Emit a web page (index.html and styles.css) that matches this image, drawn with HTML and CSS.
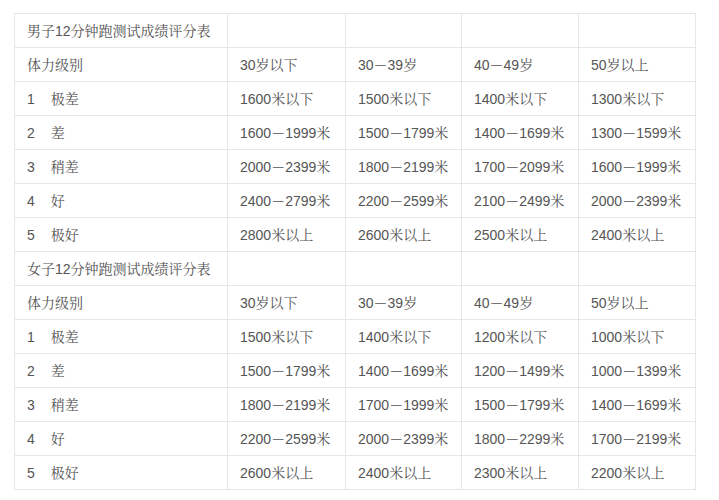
FILE: index.html
```html
<!DOCTYPE html>
<html lang="zh">
<head>
<meta charset="utf-8">
<link rel="stylesheet" href="styles.css">
</head>
<body>
<table class="score">
<colgroup><col class="c1"><col class="c2"><col class="c3"><col class="c4"><col class="c5"></colgroup>
<tbody>
<tr><td>男子12分钟跑测试成绩评分表</td><td></td><td></td><td></td><td></td></tr>
<tr><td>体力级别</td><td>30岁以下</td><td>30－39岁</td><td>40－49岁</td><td>50岁以上</td></tr>
<tr><td>1<span class="gap"></span>极差</td><td>1600米以下</td><td>1500米以下</td><td>1400米以下</td><td>1300米以下</td></tr>
<tr><td>2<span class="gap"></span>差</td><td>1600－1999米</td><td>1500－1799米</td><td>1400－1699米</td><td>1300－1599米</td></tr>
<tr><td>3<span class="gap"></span>稍差</td><td>2000－2399米</td><td>1800－2199米</td><td>1700－2099米</td><td>1600－1999米</td></tr>
<tr><td>4<span class="gap"></span>好</td><td>2400－2799米</td><td>2200－2599米</td><td>2100－2499米</td><td>2000－2399米</td></tr>
<tr><td>5<span class="gap"></span>极好</td><td>2800米以上</td><td>2600米以上</td><td>2500米以上</td><td>2400米以上</td></tr>
<tr><td>女子12分钟跑测试成绩评分表</td><td></td><td></td><td></td><td></td></tr>
<tr><td>体力级别</td><td>30岁以下</td><td>30－39岁</td><td>40－49岁</td><td>50岁以上</td></tr>
<tr><td>1<span class="gap"></span>极差</td><td>1500米以下</td><td>1400米以下</td><td>1200米以下</td><td>1000米以下</td></tr>
<tr><td>2<span class="gap"></span>差</td><td>1500－1799米</td><td>1400－1699米</td><td>1200－1499米</td><td>1000－1399米</td></tr>
<tr><td>3<span class="gap"></span>稍差</td><td>1800－2199米</td><td>1700－1999米</td><td>1500－1799米</td><td>1400－1699米</td></tr>
<tr><td>4<span class="gap"></span>好</td><td>2200－2599米</td><td>2000－2399米</td><td>1800－2299米</td><td>1700－2199米</td></tr>
<tr><td>5<span class="gap"></span>极好</td><td>2600米以上</td><td>2400米以上</td><td>2300米以上</td><td>2200米以上</td></tr>
</tbody>
</table>
</body>
</html>
```
FILE: styles.css
```css
html, body {
  margin: 0;
  background: #fff;
}
body {
  padding: 13px 14px;
  font-family: "Liberation Sans", "Noto Serif CJK SC", "Noto Sans CJK SC", sans-serif;
  font-size: 14px;
  color: #555;
}
.score {
  border-collapse: collapse;
  table-layout: fixed;
  width: 682px;
}
.c1 { width: 213px; }
.c2 { width: 118px; }
.c3 { width: 116px; }
.c4 { width: 117px; }
.c5 { width: 117px; }
.score td {
  border: 1px solid #e6e6e6;
  height: 34px;
  box-sizing: border-box;
  padding: 0 12px;
  white-space: nowrap;
  line-height: 20px;
  vertical-align: middle;
}
.gap {
  display: inline-block;
  width: 16px;
}
```
